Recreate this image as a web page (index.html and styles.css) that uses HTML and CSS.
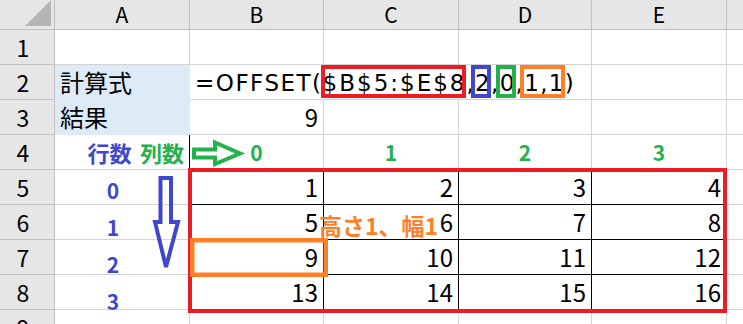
FILE: index.html
```html
<!DOCTYPE html>
<html lang="ja">
<head>
<meta charset="utf-8">
<title>OFFSET</title>
<link rel="stylesheet" href="styles.css">
</head>
<body>
<div class="sheet">
  <div class="grid">
    <div class="hd corner"><span class="tri"></span></div>
    <div class="hd ch">A</div><div class="hd ch">B</div><div class="hd ch">C</div><div class="hd ch">D</div><div class="hd ch">E</div><div class="hd ch"></div>

    <div class="hd rh">1</div><div class="c"></div><div class="c"></div><div class="c"></div><div class="c"></div><div class="c"></div><div class="c"></div>

    <div class="hd rh">2</div><div class="c fill">計算式</div>
    <div class="c formula">=OFFSET(<span class="ref r">$B$5:$E$8</span><span class="tail">,<span class="ref b">2</span>,<span class="ref g">0</span>,<span class="ref o">1,1</span>)</span></div>
    <div class="c"></div><div class="c"></div>

    <div class="hd rh">3</div><div class="c fill">結果</div><div class="c num">9</div><div class="c"></div><div class="c"></div><div class="c"></div><div class="c"></div>

    <div class="hd rh">4</div>
    <div class="c num tl"><span class="lb-blue">行数</span> <span class="lb-green">列数</span></div>
    <div class="c cn tt">0</div><div class="c cn tt">1</div><div class="c cn tt">2</div><div class="c cn tt">3</div><div class="c"></div>

    <div class="hd rh">5</div><div class="c tl"></div><div class="c num t">1</div><div class="c num t">2</div><div class="c num t">3</div><div class="c num t">4</div><div class="c"></div>
    <div class="hd rh">6</div><div class="c tl"></div><div class="c num t">5</div><div class="c num t">6</div><div class="c num t">7</div><div class="c num t">8</div><div class="c"></div>
    <div class="hd rh">7</div><div class="c tl"></div><div class="c num t">9</div><div class="c num t">10</div><div class="c num t">11</div><div class="c num t">12</div><div class="c"></div>
    <div class="hd rh">8</div><div class="c tl"></div><div class="c num t">13</div><div class="c num t">14</div><div class="c num t">15</div><div class="c num t">16</div><div class="c"></div>
    <div class="hd rh">9</div><div class="c"></div><div class="c"></div><div class="c"></div><div class="c"></div><div class="c"></div><div class="c"></div>
  </div>

  <svg class="marks" width="743" height="324" viewBox="0 0 743 324" xmlns="http://www.w3.org/2000/svg">
    <rect x="190" y="170" width="535" height="141" fill="none" stroke="#ed1c24" stroke-width="4"/>
    <rect x="192.25" y="240.25" width="133.5" height="34.5" fill="none" stroke="#ff7f27" stroke-width="4.5"/>
    <polygon points="194,149.5 215,149.5 215,142.5 240,153.5 215,164 215,157.5 194,157.5" fill="none" stroke="#22b14c" stroke-width="4" stroke-linejoin="miter"/>
    <polygon points="160.5,178 171,178 171,222 178,222 166,267 155,222 160.5,222" fill="none" stroke="#3f48cc" stroke-width="4" stroke-linejoin="miter"/>
  </svg>

  <div class="rowlabels">
    <span>0</span><span>1</span><span>2</span><span>3</span>
  </div>

  <div class="note">高さ1、幅1</div>
</div>
</body>
</html>
```

FILE: styles.css
```css
* { box-sizing: border-box; }

html, body {
  margin: 0;
  padding: 0;
  background: #ffffff;
}

body {
  width: 743px;
  height: 324px;
  overflow: hidden;
  font-family: "Noto Sans CJK JP", "Noto Sans", sans-serif;
  color: #000000;
}

.sheet {
  position: relative;
  width: 743px;
  height: 324px;
  overflow: hidden;
}

.grid {
  display: grid;
  grid-template-columns: 55px 135px 134px 135px 133px 135px 60px;
  grid-template-rows: 30px repeat(9, 35px);
}

.c {
  border-right: 1px solid #d4d4d4;
  border-bottom: 1px solid #d4d4d4;
  font-size: 24px;
  line-height: 34px;
  padding: 0 5px;
  white-space: nowrap;
  background: #ffffff;
}

.hd {
  background: #e6e6e6;
  border-right: 1px solid #c0c0c0;
  border-bottom: 1px solid #c0c0c0;
  color: #000000;
  white-space: nowrap;
}

.corner {
  position: relative;
}

.tri {
  position: absolute;
  right: 3px;
  bottom: 3px;
  width: 26px;
  height: 26px;
  background: #b5b5b5;
  clip-path: polygon(100% 0, 100% 100%, 0 100%);
}

.ch {
  text-align: center;
  font-size: 21px;
  line-height: 29px;
}

.rh {
  text-align: center;
  font-size: 23px;
  line-height: 34px;
  padding-right: 8px;
}

.fill {
  background: #ddebf7;
  border-right-color: #ddebf7;
  border-bottom-color: #ddebf7;
}

.formula {
  grid-column: span 3;
  font-family: "DejaVu Sans", "Noto Sans", sans-serif;
  font-size: 23px;
  letter-spacing: 1.5px;
  line-height: 32px;
  padding-top: 2px;
}

.ref.r {
  letter-spacing: 2px;
}

.tail {
  letter-spacing: 1.3px;
}

.num {
  text-align: right;
}

.t {
  border-right-color: #000000;
  border-bottom-color: #000000;
}

.tl {
  border-right-color: #000000;
}

.tt {
  border-bottom-color: #000000;
}

.cn {
  text-align: center;
  color: #22b14c;
  font-weight: bold;
  font-size: 21px;
}

.lb-blue {
  color: #3f48cc;
  font-weight: bold;
  font-size: 22px;
}

.lb-green {
  color: #22b14c;
  font-weight: bold;
  font-size: 22px;
  margin-left: 3px;
}

.ref {
  position: relative;
}

.ref::after {
  content: "";
  position: absolute;
  left: -4px;
  right: 0;
  top: -5px;
  bottom: -2px;
  border: 4px solid currentColor;
}

.ref.r::after { border-color: #ed1c24; left: -2px; }
.ref.b::after { border-color: #3f48cc; }
.ref.g::after { border-color: #22b14c; }
.ref.o::after { border-color: #ff7f27; }

.marks {
  position: absolute;
  left: 0;
  top: 0;
  pointer-events: none;
}

.rowlabels {
  position: absolute;
  left: 98px;
  top: 172px;
  width: 30px;
  display: flex;
  flex-direction: column;
  align-items: center;
  color: #3f48cc;
  font-weight: bold;
  font-size: 21px;
  line-height: 37px;
}

.note {
  position: absolute;
  left: 319px;
  top: 209px;
  color: #ff7f27;
  font-weight: bold;
  font-size: 23px;
  line-height: 32px;
  white-space: nowrap;
}
```
